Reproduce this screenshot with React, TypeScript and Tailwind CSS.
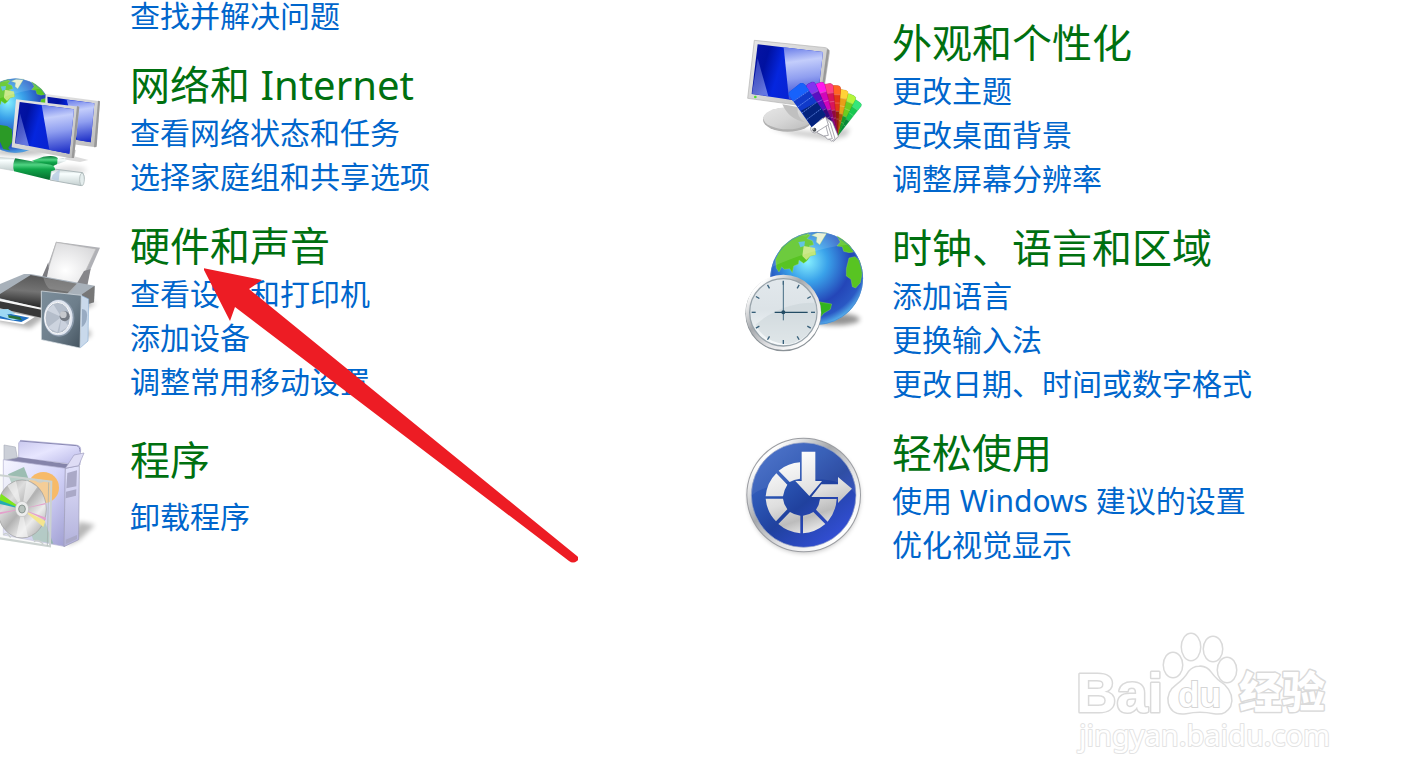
import type { ReactNode } from "react";

const CONTINENTS = (
  <g fill="#58c422" stroke="#a8e060" strokeWidth="1">
    <path d="M122 116 L140 82 L172 56 L206 42 L226 44 L216 56 L232 62 L236 74 L222 78 L240 92 L242 104 L226 108 L216 122 L206 130 L192 120 L190 132 L176 138 L172 158 L164 146 L148 148 L140 140 L132 156 L124 144 Z" />
    <path d="M206 78 L240 84 L242 104 L226 108 L214 120 L202 108 Z" fill="#c3e67a" stroke="none" />
    <path d="M190 66 L210 64 L208 78 L196 82 Z" fill="#4bbcdf" stroke="none" />
    <path d="M196 46 L222 38 L214 48 Z" />
    <path d="M248 38 L276 38 L266 54 L254 74 L244 66 L246 52 L230 46 Z" fill="#e6efcf" />
    <path d="M306 48 L322 58 L344 76 L356 96 L342 98 L326 94 L322 80 L306 78 L316 66 Z" />
    <path d="M342 114 L360 110 L374 122 L382 158 L376 188 L362 204 L352 200 L348 178 L334 168 L334 146 Z" />
    <path d="M244 244 L290 252 L286 268 L266 280 L258 290 L250 284 Z" fill="#31b31e" />
  </g>
);

function Globe() {
  return (
    <g>
      <circle cx="245" cy="175" r="139" fill="url(#sea)" />
      {CONTINENTS}
      <path d="M112 140 Q150 38 245 36 Q300 38 340 74 Q250 80 112 140Z" fill="#fff" opacity=".13" />
      <circle cx="245" cy="175" r="138" fill="none" stroke="#4a86cd" strokeWidth="3" opacity=".7" />
    </g>
  );
}

function Defs() {
  return (
    <svg width="0" height="0" className="absolute" aria-hidden="true">
      <defs>
        <radialGradient id="sea" cx=".4" cy=".32" r=".72">
          <stop offset="0" stopColor="#86f0ff" />
          <stop offset=".3" stopColor="#3aa2ea" />
          <stop offset=".65" stopColor="#2446b8" />
          <stop offset=".85" stopColor="#2a58c4" />
          <stop offset="1" stopColor="#5fc4f4" />
        </radialGradient>
        <linearGradient id="screen" x1="0" y1="0" x2="1" y2=".25">
          <stop offset="0" stopColor="#0714a4" />
          <stop offset=".25" stopColor="#0011a0" />
          <stop offset=".46" stopColor="#0526de" />
          <stop offset="1" stopColor="#0a1fc4" />
        </linearGradient>
        <linearGradient id="glare" x1=".3" y1="0" x2=".4" y2="1">
          <stop offset="0" stopColor="#6f82ea" />
          <stop offset=".25" stopColor="#c3cdfb" />
          <stop offset=".55" stopColor="#8f9ef0" />
          <stop offset="1" stopColor="#2032c8" />
        </linearGradient>
        <linearGradient id="glint" x1="0" y1="0" x2=".3" y2="1">
          <stop offset="0" stopColor="#5568d8" stopOpacity=".5" />
          <stop offset="1" stopColor="#a5b2f6" stopOpacity=".6" />
        </linearGradient>
        <linearGradient id="silver" x1="0" y1="0" x2="1" y2="1">
          <stop offset="0" stopColor="#e6e6e6" />
          <stop offset=".5" stopColor="#d6d6d6" />
          <stop offset="1" stopColor="#bababa" />
        </linearGradient>
        <linearGradient id="ring" x1="0" y1="0" x2="1" y2="1">
          <stop offset="0" stopColor="#96999d" />
          <stop offset=".16" stopColor="#ffffff" />
          <stop offset=".4" stopColor="#a5a8ac" />
          <stop offset=".62" stopColor="#e4e4e6" />
          <stop offset=".85" stopColor="#ffffff" />
          <stop offset="1" stopColor="#8d9196" />
        </linearGradient>
        <linearGradient id="green" x1="0" y1="0" x2="0" y2="1">
          <stop offset="0" stopColor="#087234" />
          <stop offset=".3" stopColor="#4fd482" />
          <stop offset=".5" stopColor="#10a64a" />
          <stop offset="1" stopColor="#056a2d" />
        </linearGradient>
        <linearGradient id="tube" x1="0" y1="0" x2="0" y2="1">
          <stop offset="0" stopColor="#bcc8c9" />
          <stop offset=".3" stopColor="#f9ffff" />
          <stop offset="1" stopColor="#c3cfcf" />
        </linearGradient>
        <linearGradient id="lid" x1=".6" y1="0" x2=".4" y2="1">
          <stop offset="0" stopColor="#565656" />
          <stop offset=".5" stopColor="#747474" />
          <stop offset="1" stopColor="#1f1f1f" />
        </linearGradient>
        <radialGradient id="paper" cx=".4" cy=".65" r=".7">
          <stop offset="0" stopColor="#ffffff" />
          <stop offset="1" stopColor="#dadadc" />
        </radialGradient>
        <linearGradient id="speaker" x1="0" y1="0" x2="1" y2="1">
          <stop offset="0" stopColor="#7c8e9b" />
          <stop offset=".55" stopColor="#6d7e8b" />
          <stop offset="1" stopColor="#44535f" />
        </linearGradient>
        <linearGradient id="box" x1="0" y1="0" x2="1" y2="1">
          <stop offset="0" stopColor="#f6f6ff" />
          <stop offset=".5" stopColor="#d7d7fb" />
          <stop offset="1" stopColor="#a09fd2" />
        </linearGradient>
        <linearGradient id="flap" x1="0" y1="0" x2="1" y2="1">
          <stop offset="0" stopColor="#c9c8ee" />
          <stop offset=".45" stopColor="#e7e6ff" />
          <stop offset="1" stopColor="#b6b5e6" />
        </linearGradient>
        <linearGradient id="boxSide" x1="0" y1="0" x2="0" y2="1">
          <stop offset="0" stopColor="#e0e0fb" />
          <stop offset="1" stopColor="#b2b1da" />
        </linearGradient>
        <linearGradient id="disc" x1="0" y1="0" x2="1" y2="1">
          <stop offset="0" stopColor="#8e8e8e" />
          <stop offset=".3" stopColor="#dedede" />
          <stop offset=".5" stopColor="#b2b2b2" />
          <stop offset=".7" stopColor="#ececec" />
          <stop offset="1" stopColor="#979797" />
        </linearGradient>
        <linearGradient id="dial" x1="0" y1="0" x2="0" y2="1">
          <stop offset="0" stopColor="#e2e8ec" />
          <stop offset=".45" stopColor="#dce3e7" />
          <stop offset="1" stopColor="#f8fbfc" />
        </linearGradient>
        <linearGradient id="ease" x1="0" y1="0" x2=".8" y2="1">
          <stop offset="0" stopColor="#476fcc" />
          <stop offset=".4" stopColor="#2a54b2" />
          <stop offset=".6" stopColor="#20419e" />
          <stop offset="1" stopColor="#3550dc" />
        </linearGradient>
        <linearGradient id="wedge" gradientUnits="userSpaceOnUse" x1="150" y1="90" x2="230" y2="325">
          <stop offset="0" stopColor="#ffffff" />
          <stop offset=".55" stopColor="#dedede" />
          <stop offset=".8" stopColor="#bcbcbc" />
          <stop offset="1" stopColor="#ececec" />
        </linearGradient>
        <filter id="soft" x="-30%" y="-50%" width="160%" height="200%">
          <feGaussianBlur stdDeviation="8" />
        </filter>
      </defs>
    </svg>
  );
}

function NetworkIcon() {
  return (
    <svg viewBox="-51 -3 441 420" className="h-[140px] w-[147px] shrink-0" aria-hidden="true">
      <ellipse cx="210" cy="330" rx="50" ry="12" fill="#000" opacity=".12" filter="url(#soft)" />
      <ellipse cx="60" cy="276" rx="80" ry="8" fill="#000" opacity=".3" filter="url(#soft)" />
      <g transform="translate(-150 27) scale(.8)">
        <Globe />
        <path d="M186 210 L214 214 L232 226 L234 272 L218 296 L226 306 L200 300 L186 270Z" fill="#2b9a26" />
      </g>
      <path d="M210 286 L265 300 L240 306 L190 298Z" fill="#c4c4c4" opacity=".6" />
      <path d="M137 102 L300 124 L288 262 L230 254 L130 230Z" fill="url(#silver)" />
      <path d="M300 124 L294 122 L282 262 L290 260Z" fill="#999" />
      <path d="M142 110 L283 130 L272 247 L150 226Z" fill="url(#screen)" />
      <path d="M200 119 L283 130 L272 247 L232 240Z" fill="url(#glare)" />
      <path d="M210 268 L228 270 L222 296 L206 294Z" fill="#d8d8d8" />
      <path d="M48 118 L238 140 L222 294 L208 294 L35 262Z" fill="url(#silver)" />
      <path d="M238 140 L231 138 L215 294 L222 294Z" fill="#999" />
      <path d="M59 126 L222 148 L208 281 L45 250Z" fill="url(#screen)" />
      <path d="M125 135 L222 148 L208 281 L148 269Z" fill="url(#glare)" />
      <path d="M60 160 L87 258 L46 250Z" fill="url(#glint)" />
      <path d="M96 302 L130 290 Q168 284 174 296 L172 312 L142 326Z" fill="url(#green)" />
      <path d="M172 298 L190 294 L200 302 L174 312Z" fill="url(#tube)" />
      <path d="M-60 288 L44 296 L40 332 L-60 314Z" fill="url(#tube)" stroke="#c3cccd" strokeWidth="2" />
      <path d="M154 326 L248 338 Q258 356 244 377 L150 360Z" fill="url(#tube)" stroke="#adb8ba" strokeWidth="3" />
      <path d="M158 344 L180 328 L176 364 L154 358Z" fill="#aec5e0" opacity=".7" />
      <ellipse cx="246" cy="358" rx="7" ry="19" fill="#e4eded" stroke="#a4b0b1" strokeWidth="2" />
      <path d="M46 295 L152 314 Q166 318 165 330 L153 334 L149 360 L42 334 Q36 312 46 295Z" fill="url(#green)" />
    </svg>
  );
}

function PrinterIcon() {
  return (
    <svg viewBox="-51 -15 441 420" className="h-[140px] w-[147px] shrink-0" aria-hidden="true">
      <path d="M-10 290 L90 310 L130 280 L130 240 L0 240Z M240 260 L290 235 L230 225Z M240 350 L275 330 L265 310Z" fill="#000" opacity=".3" filter="url(#soft)" />
      <path d="M128 168 L168 50 L300 68 L252 178Z" fill="#b0b1b6" />
      <path d="M135 164 L169 52 L288 72 L236 182Z" fill="url(#paper)" stroke="#b5b5b5" strokeWidth="2" />
      <path d="M126 156 L145 112 L146 130 L138 170Z" fill="#7c7c80" />
      <path d="M228 180 L252 138 L272 132 L262 182Z" fill="#86868a" />
      <path d="M-60 202 L72 147 L92 147 L284 182 L282 232 L246 244 L118 252 L-60 222Z" fill="#a8b1ba" />
      <path d="M284 182 L282 232 L246 242 L246 208Z" fill="#777" />
      <path d="M92 150 L230 176 L200 208 L124 202 L122 250 L-14 216Z" fill="url(#lid)" />
      <path d="M130 158 Q138 186 150 192 L214 202 L232 176Z" fill="#aaa" opacity=".4" />
      <path d="M-60 214 L124 252 L124 278 L-60 236Z" fill="#383838" />
      <path d="M-60 208 L124 248 L124 254 L-60 216Z" fill="#f5f5f5" />
      <path d="M-60 244 L104 276 L70 298 L-60 276Z" fill="#fff" />
      <path d="M-60 248 L88 278 L64 291 L-60 270Z" fill="#206fc1" />
      <path d="M-4 254 L24 252 L46 266 L20 268 L60 282 L40 286 L-4 272Z" fill="#9dd9f4" />
      <path d="M24 270 L60 276 L66 286 L26 278Z" fill="#28713a" />
      <path d="M243 211 L266 222 L264 348 L240 369Z" fill="#c9d9eb" stroke="#8fb2d4" strokeWidth="2" />
      <path d="M246 252 Q266 252 260 284 Q256 300 245 306Z" fill="#98abc2" />
      <path d="M124 198 L244 211 L240 369 L124 344Z" fill="url(#speaker)" stroke="#dfe5ea" strokeWidth="2" />
      <ellipse cx="177" cy="279" rx="46" ry="56" fill="#8998a9" />
      <ellipse cx="175" cy="278" rx="43" ry="53" fill="#dfe5f0" />
      <ellipse cx="173" cy="279" rx="38" ry="47" fill="#b4bdca" stroke="#fafafa" strokeWidth="3" />
      <path d="M184 276 L140 256 L160 238 Z M184 276 L142 308 L172 322Z" fill="#dde3ec" opacity=".6" />
      <path d="M184 276 L206 304 L178 322Z" fill="#d8dee9" opacity=".6" />
      <circle cx="194" cy="274" r="15" fill="#747a83" />
      <circle cx="190" cy="269" r="10" fill="#c6c9ce" />
    </svg>
  );
}

function ProgramsIcon() {
  return (
    <svg viewBox="-51 27 441 420" className="h-[140px] w-[147px] shrink-0" aria-hidden="true">
      <path d="M200 362 L238 345 L285 300 L238 290Z" fill="#000" opacity=".28" filter="url(#soft)" />
      <path d="M62 46 L228 60 Q242 62 242 72 L240 120 L56 98 L56 54Z" fill="url(#flap)" stroke="#aaa9cb" strokeWidth="2" />
      <path d="M60 48 L230 62 Q240 64 240 80" fill="none" stroke="#8b8ab4" strokeWidth="3" />
      <path d="M10 106 L50 96 L238 122 L196 134Z" fill="#8584aa" />
      <path d="M12 60 L46 66 L52 98 L12 106Z" fill="#ccd0d8" stroke="#aaafbb" strokeWidth="2" />
      <path d="M10 104 L196 130 L192 364 L10 330Z" fill="url(#box)" stroke="#b3b2d2" strokeWidth="2" />
      <path d="M196 130 L238 122 L236 344 L192 365Z" fill="url(#boxSide)" stroke="#9997b4" strokeWidth="2" />
      <path d="M196 130 L222 90 L252 84 L236 122Z" fill="#dedcf5" stroke="#a09fc0" strokeWidth="2" />
      <path d="M202 144 L231 136 L229 184 L199 190Z M198 200 L229 193 L228 212 L197 220Z M197 344 L231 330 L231 342 L197 358Z" fill="#aaa9c7" />
      <path d="M24 148 L72 126 L160 356 L100 345Z" fill="#8eb5a5" opacity=".85" />
      <circle cx="130" cy="188" r="47" fill="#f7ba68" />
      <path d="M-51 142 L154 168 L150 367 L-51 335Z" fill="#edf1f0" opacity=".35" />
      <path d="M-51 144 L154 170 L150 364 L-51 332" fill="none" stroke="#cbd2d0" strokeWidth="6" />
      <path d="M146 172 L142 362" stroke="#a3aeaa" strokeWidth="2" />
      <ellipse cx="66" cy="252" rx="73" ry="87" fill="url(#disc)" stroke="#9b9b9b" strokeWidth="2" />
      <path d="M66 252 L22 182 L48 168Z M66 252 L80 166 L112 186Z M66 252 L84 336 L48 336Z" fill="#f5f5f5" opacity=".6" />
      <path d="M66 252 L3 206 L-2 228Z" fill="#7ee51c" />
      <path d="M66 252 L0 226 L-4 236Z" fill="#24acb2" />
      <path d="M66 252 L136 288 L130 306Z" fill="#f4e58f" />
      <path d="M66 252 L138 278 L137 286Z M66 252 L136 234 L137 238Z M66 252 L-2 268 L-2 262Z" fill="#e5a0cc" />
      <ellipse cx="66" cy="252" rx="20" ry="23" fill="#ededed" stroke="#bdbdbd" strokeWidth="2" />
      <ellipse cx="66" cy="252" rx="10" ry="12" fill="#b8c2bd" stroke="#8a9691" strokeWidth="3" />
      <path d="M102 350 Q114 340 130 358 M106 164 Q116 176 130 168 M10 330 Q20 318 32 338" fill="none" stroke="#c9cfcd" strokeWidth="4" />
    </svg>
  );
}

const SWATCHES = [
  { angle: 35, reach: 0.9, light: "#35e67b", mid: "#18c850", dark: "#08883a" },
  { angle: 23, reach: 0.96, light: "#b5f53a", mid: "#6bce20", dark: "#159a2c" },
  { angle: 11, reach: 1.01, light: "#ffd238", mid: "#e89f18", dark: "#a65e08" },
  { angle: 1, reach: 1.09, light: "#ff6423", mid: "#e33514", dark: "#94210a" },
  { angle: -8, reach: 1.14, light: "#ff3d88", mid: "#d9155b", dark: "#8d0c3b" },
  { angle: -17, reach: 1.2, light: "#ff18ed", mid: "#d206bb", dark: "#7e087c" },
  { angle: -26, reach: 1.27, light: "#8035f0", mid: "#590fc1", dark: "#310a7c" },
];

function AppearanceIcon() {
  return (
    <svg viewBox="30 -24 441 420" className="h-[140px] w-[147px] shrink-0" aria-hidden="true">
      <path d="M100 308 L240 322 L345 310 L335 332 L290 345 L180 330Z" fill="#000" opacity=".22" filter="url(#soft)" />
      <ellipse cx="158" cy="284" rx="74" ry="36" fill="#b0b0b0" />
      <ellipse cx="158" cy="280" rx="73" ry="33" fill="url(#silver)" />
      <path d="M142 238 L188 246 Q184 276 210 292 Q162 284 142 238Z" fill="#c0c0c0" />
      <path d="M58 46 L272 68 Q284 72 283 84 L258 250 L38 220Z" fill="url(#silver)" stroke="#b2b2b2" strokeWidth="2" />
      <path d="M283 76 L276 72 L252 250 L258 250Z" fill="#999" />
      <path d="M68 58 L264 81 L246 236 L50 207Z" fill="url(#screen)" />
      <path d="M146 67 L264 81 L246 236 L162 223Z" fill="url(#glare)" />
      <path d="M68 100 L100 214 L51 206Z" fill="url(#glint)" />
      <circle cx="61" cy="216" r="4" fill="#50e02e" />
      {SWATCHES.map((s) => (
        <g key={s.light} transform={`translate(300 330) rotate(${s.angle}) scale(.9 ${s.reach})`}>
          <path d="M-9 0 L-16 -128 Q-16 -135 -8 -136 L8 -136 Q16 -135 16 -128 L9 0Z" fill={s.mid} stroke={s.dark} strokeWidth="1" />
          <path d="M-15 -112 L-16 -128 Q-16 -135 -8 -136 L8 -136 Q16 -135 16 -128 L15 -112Z" fill={s.light} />
          <path d="M-12 -66 L12 -66 L9 0 L-9 0Z" fill={s.dark} />
          <path d="M-15 -111 H15 M-14 -88 H14 M-12 -65 H12 M-11 -44 H11" stroke="#fff" strokeWidth="1.5" opacity=".45" />
        </g>
      ))}
      <g stroke="#7e7e8a" strokeWidth="2" fill="#fff">
        <path d="M270 276 L292 290 L310 334 L296 349 L286 340Z" />
        <path d="M270 276 L286 294 L300 341 L290 349 L276 334Z" />
        <path d="M268 276 L278 296 L292 341 L278 343 L264 328Z" />
        <path d="M270 276 L272 300 L280 331 L266 333 L246 323Z" />
        <path d="M272 275 L228 305 Q224 322 240 324 L280 299Z" />
      </g>
      <path d="M162 211 Q158 205 164 200 L196 175 Q204 172 210 179 L272 270 L230 306Z" fill="#103aca" />
      <path d="M162 211 Q158 205 164 200 L196 175 Q204 172 210 179 L222 196 L174 229Z" fill="#1762fb" />
      <path d="M198 257 L246 231 L272 270 L230 306Z" fill="#04237d" />
      <path d="M175 229 L222 197 M188 246 L234 213 M201 264 L246 231 M215 284 L259 251" stroke="#7da4ff" strokeWidth="2" strokeDasharray="5 2" />
      <circle cx="238" cy="314" r="6" fill="#454a50" />
      <circle cx="236" cy="312" r="2" fill="#ddd" />
    </svg>
  );
}

function ClockIcon() {
  return (
    <svg viewBox="30 6 441 420" className="h-[140px] w-[147px] shrink-0" aria-hidden="true">
      <ellipse cx="300" cy="298" rx="74" ry="18" fill="#000" opacity=".42" filter="url(#soft)" />
      <Globe />
      <circle cx="145" cy="280" r="114" fill="#8b9297" />
      <circle cx="145" cy="277" r="113" fill="url(#ring)" />
      <circle cx="145" cy="277" r="101" fill="url(#dial)" stroke="#98a3aa" strokeWidth="4" />
      <path d="M62 314 Q140 246 242 248 A101 101 0 0 1 158 373 Q90 370 62 314Z" fill="#c8d1d6" opacity=".5" />
      <g stroke="#375f79" strokeWidth="4">
        {[0, 30, 60, 90, 120, 150, 180, 210, 240, 270, 300, 330].map((a) => (
          <path key={a} d="M145 182 V194" transform={`rotate(${a} 145 277)`} />
        ))}
      </g>
      <path d="M145 184 V301" stroke="#456b83" strokeWidth="3" />
      <path d="M119 277 H218" stroke="#234c64" strokeWidth="4" />
      <circle cx="145" cy="277" r="6" fill="#234c64" />
    </svg>
  );
}

function EaseIcon() {
  return (
    <svg viewBox="30 6 441 420" className="h-[140px] w-[147px] shrink-0" aria-hidden="true">
      <circle cx="207" cy="216" r="168" fill="#000" opacity=".25" filter="url(#soft)" />
      <circle cx="206" cy="210" r="172" fill="#9a9ca1" />
      <circle cx="206" cy="210" r="169" fill="url(#ring)" />
      <circle cx="206" cy="210" r="157" fill="url(#ease)" stroke="#9fa9c7" strokeWidth="2" />
      <path d="M49 212 A157 157 0 0 1 363 210 Q330 156 210 164 Q90 176 49 212Z" fill="#fff" opacity=".07" />
      <g fill="url(#wedge)">
        <path d="M195 112 V161 Q176 164 164 171 L131 137 Q160 114 195 112Z" />
        <path d="M124 145 L157 179 Q147 194 144 214 H92 Q96 172 124 145Z" />
        <path d="M92 221 H144 Q146 239 157 253 L123 289 Q96 262 92 221Z" />
        <path d="M165 261 Q179 270 196 272 V325 Q159 322 130 297Z" />
        <path d="M204 272 Q222 270 235 261 L271 297 Q240 323 204 325Z" />
        <path d="M243 254 Q253 240 255 222 H305 Q303 260 278 290Z" />
        <path d="M200 80 H241 V168 H261 L223 213 L181 168 H200Z" />
        <path d="M259 178 H309 V156 L351 191 L309 234 V216 H229Z" />
      </g>
    </svg>
  );
}

function Pointer() {
  return (
    <svg viewBox="0 0 374 296" className="pointer-events-none absolute left-[204px] top-[268px] h-[296px] w-[374px]" aria-hidden="true">
      <path d="M-1 0 L58 12 L45 21 L373 288 Q376 291 373 293 Q369 296 365 293 L31 39 L26 53Z" fill="#ed1c24" />
    </svg>
  );
}

function Watermark() {
  return (
    <svg viewBox="0 0 290 150" className="pointer-events-none absolute right-[54px] top-[620px] h-[150px] w-[290px]" role="img" aria-label="Baidu 经验 jingyan.baidu.com">
      <g fill="#fff" stroke="#dadada" strokeWidth="3" strokeLinejoin="round" style={{ paintOrder: "stroke" }}>
        <text x="16" y="92" fontSize="56" fontWeight="700" fontFamily="Liberation Sans, sans-serif">Bai</text>
        <ellipse cx="113" cy="45" rx="9" ry="12" />
        <ellipse cx="131" cy="27" rx="9" ry="13" />
        <ellipse cx="153" cy="29" rx="9" ry="12" />
        <ellipse cx="167" cy="50" rx="9" ry="12" />
        <path d="M139 47 Q146 46 151 53 Q156 60 164 65 Q174 75 170 86 Q165 95 154 93 Q140 90 126 93 Q112 95 109 83 Q107 72 117 65 Q125 59 129 52 Q133 47 139 47Z" />
        <text x="179" y="88" fontSize="43" fontWeight="900" fontFamily="Noto Sans CJK SC, sans-serif">经验</text>
        <text x="19" y="126" fontSize="29" strokeWidth="2" stroke="#e3e3e3" fontFamily="Noto Sans, sans-serif">jingyan.baidu.com</text>
      </g>
      <text x="118" y="87" fontSize="35" fill="#fff" stroke="#d5d5d5" strokeWidth="2" fontWeight="700" fontFamily="Liberation Sans, sans-serif" style={{ paintOrder: "stroke" }}>du</text>
    </svg>
  );
}

type CategoryProps = { icon: ReactNode; title: string; links: string[]; spaced?: boolean };

function Category({ icon, title, links, spaced = false }: CategoryProps) {
  return (
    <section className={spaced ? "flex items-start pt-[9px]" : "flex items-start"}>
      {icon}
      <div className="whitespace-nowrap">
        <h2 className="text-[40px] leading-[52px] text-[#007010]">
          <a href="#" className="hover:underline">{title}</a>
        </h2>
        <ul className={spaced ? "pt-[9px]" : ""}>
          {links.map((link) => (
            <li key={link} className="text-[30px] leading-[44px]">
              <a href="#" className="text-[#0066cc] hover:underline">{link}</a>
            </li>
          ))}
        </ul>
      </div>
    </section>
  );
}

export default function App() {
  return (
    <main className="relative min-h-screen overflow-hidden bg-white font-['Noto_Sans','Noto_Sans_CJK_SC',sans-serif]" lang="zh-CN">
      <Defs />
      <div className="-ml-[17px] grid grid-cols-[762fr_659fr] items-start">
        <div className="-mt-[6px] flex flex-col gap-[21px]">
          <a href="#" className="ml-[147px] text-[30px] leading-[44px] text-[#0066cc] hover:underline">查找并解决问题</a>
          <Category icon={<NetworkIcon />} title="网络和 Internet" links={["查看网络状态和任务", "选择家庭组和共享选项"]} />
          <Category icon={<PrinterIcon />} title="硬件和声音" links={["查看设备和打印机", "添加设备", "调整常用移动设置"]} />
          <Category icon={<ProgramsIcon />} title="程序" links={["卸载程序"]} spaced />
        </div>
        <div className="flex flex-col gap-[21px] pt-[17px]">
          <Category icon={<AppearanceIcon />} title="外观和个性化" links={["更改主题", "更改桌面背景", "调整屏幕分辨率"]} />
          <Category icon={<ClockIcon />} title="时钟、语言和区域" links={["添加语言", "更换输入法", "更改日期、时间或数字格式"]} />
          <Category icon={<EaseIcon />} title="轻松使用" links={["使用 Windows 建议的设置", "优化视觉显示"]} />
        </div>
      </div>
      <Pointer />
      <Watermark />
    </main>
  );
}
